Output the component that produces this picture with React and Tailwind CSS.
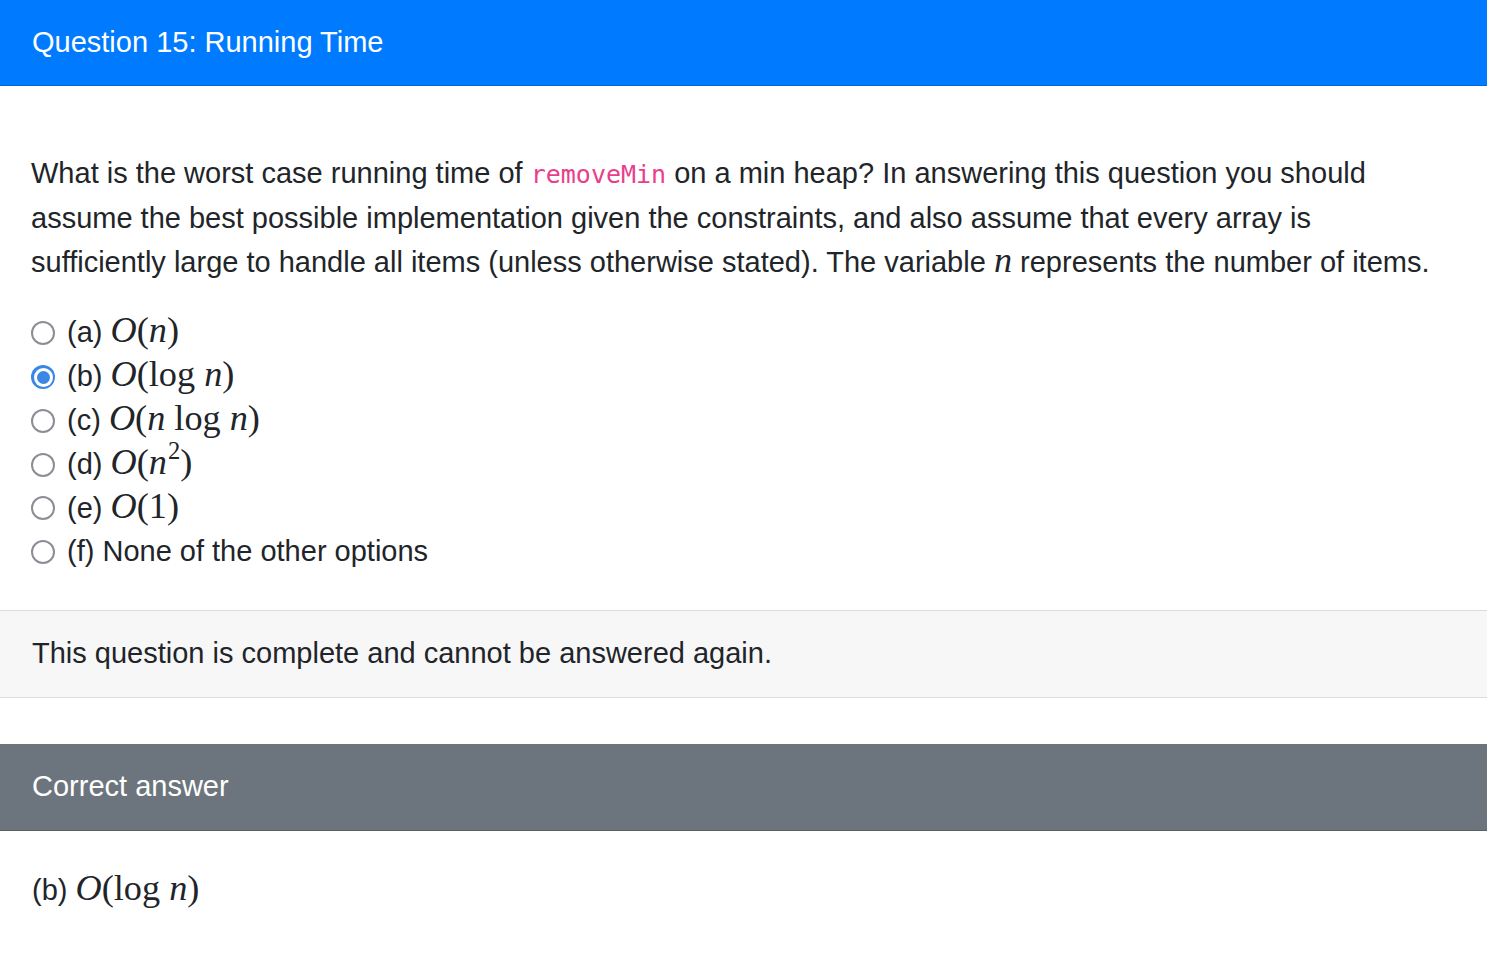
import React from "react";

const sans = "font-['Liberation_Sans',Arial,sans-serif]";

// Math looks like KaTeX; serif fallback
function M({ children }) {
  return (
    <span className="font-['Liberation_Serif','Times_New_Roman',serif] text-[1.25em] leading-none">
      {children}
    </span>
  );
}

function I({ children }) {
  return <span className="italic">{children}</span>;
}

function Radio({ checked }) {
  if (checked) {
    return (
      <span className="w-[24px] h-[24px] rounded-full bg-[#3b87e4] flex items-center justify-center shrink-0">
        <span className="w-[19px] h-[19px] rounded-full bg-white flex items-center justify-center">
          <span className="w-[13px] h-[13px] rounded-full bg-[#3b87e4]" />
        </span>
      </span>
    );
  }
  return (
    <span className="w-[24px] h-[24px] rounded-full border-[2.5px] border-[#8d8d96] bg-white shrink-0" />
  );
}

const options = [
  { label: "(a)", math: <><I>O</I>(<I>n</I>)</> },
  { label: "(b)", math: <><I>O</I>(log <I>n</I>)</>, checked: true },
  { label: "(c)", math: <><I>O</I>(<I>n</I> log <I>n</I>)</> },
  { label: "(d)", math: <><I>O</I>(<I>n</I><sup className="text-[0.68em] relative -top-[0.6em] align-baseline ml-[1px]">2</sup>)</> },
  { label: "(e)", math: <><I>O</I>(1)</> },
  { label: "(f)", text: "None of the other options" },
];

export default function App() {
  return (
    <div className={`${sans} text-[#212529] text-[29px] leading-[43.8px] bg-white min-h-screen`}>
      {/* QUESTION CARD */}
      <div className="h-[86px] bg-[#007bff] border-b border-[#0069d9] text-white px-8 flex items-center">
        Question 15: Running Time
      </div>

      <div className="pl-[31px] pr-[40px] pt-[66px] pb-[36px]">
        <p className="mb-[27px]">
          What is the worst case running time of{" "}
          <code className="font-['DejaVu_Sans_Mono',monospace] text-[25px] text-[#e83e8c]">removeMin</code>{" "}
          on a min heap? In answering this question you should assume the best possible implementation
          given the constraints, and also assume that every array is sufficiently large to handle all
          items (unless otherwise stated). The variable <M><I>n</I></M> represents the number of items.
        </p>

        <div className="flex flex-col">
          {options.map((o) => (
            <div key={o.label} className="h-[43.8px] flex items-center gap-[12px]">
              <Radio checked={o.checked} />
              <span>
                {o.label} {o.text ? o.text : <M>{o.math}</M>}
              </span>
            </div>
          ))}
        </div>
      </div>

      {/* FOOTER */}
      <div className="h-[88px] bg-[#f7f7f7] border-y border-[#dcdcdc] px-8 flex items-center">
        This question is complete and cannot be answered again.
      </div>

      <div className="h-[46px]" />

      {/* CORRECT ANSWER CARD */}
      <div className="h-[87px] bg-[#6c757d] border-b border-[#5a6268] text-white px-8 flex items-center">
        Correct answer
      </div>
      <div className="px-8 pt-[38px] pb-[36px]">
        (b){" "}
        <M>
          <I>O</I>(log <I>n</I>)
        </M>
      </div>
    </div>
  );
}
